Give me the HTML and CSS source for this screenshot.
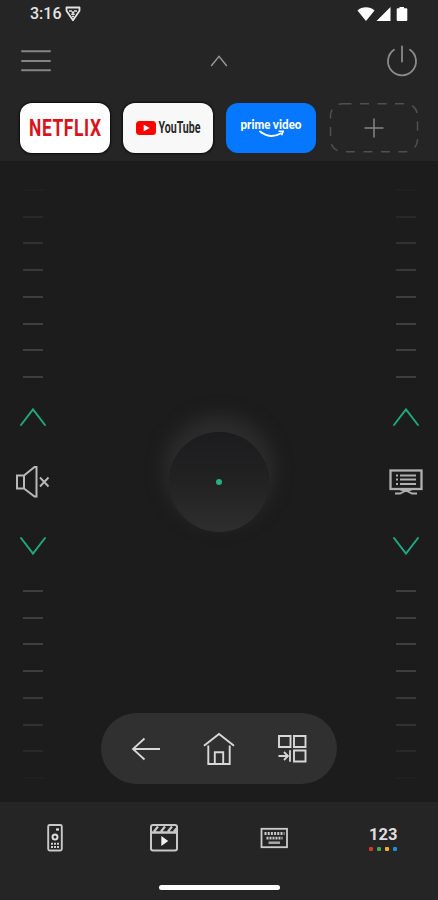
FILE: index.html
```
<!DOCTYPE html>
<html lang="en">
<head>
  <meta charset="UTF-8">
  <meta name="viewport" content="width=device-width, initial-scale=1.0">
  <title>TV Remote</title>
  <link rel="stylesheet" href="styles.css">
</head>
<body>
  <header class="header">
    <div class="status-bar">
      <span class="clock">3:16</span>
      <svg class="status-badge" width="16" height="16" viewBox="0 0 16 16">
        <path d="M1.500 1.500h13v3.200L8 14.200 1.500 4.700z" fill="none" stroke="#e4e4e4" stroke-width="1.800" stroke-linejoin="round"/>
        <path d="M4 5h3M9 5h3M6.300 8.200h3.400M7 10.500h2" stroke="#e4e4e4" stroke-width="1.500"/>
        <circle cx="8" cy="6.500" r="1.300" fill="#e4e4e4"/>
      </svg>
      <svg class="status-icons" width="52" height="16" viewBox="0 0 52 16">
        <path d="M0.500 4.400C5 0.200 13 0.200 17.500 4.400L9 15z" fill="#fff"/>
        <path d="M19.500 15L33.500 1v14z" fill="#fff"/>
        <path d="M42.500 1h4.500v1.300h2.300q1 0 1 1V14q0 1-1 1h-8.600q-1 0-1-1V3.300q0-1 1-1h1.800z" fill="#fff"/>
      </svg>
    </div>

    <div class="toolbar">
      <svg width="30" height="32" viewBox="0 0 30 32">
        <path d="M1 6.200h28M1 16h28M1 25.300h28" stroke="#858585" stroke-width="2" stroke-linecap="round"/>
      </svg>
      <svg width="18" height="12" viewBox="0 0 18 12">
        <path d="M1.200 11L9 1.300 16.800 11" fill="none" stroke="#999" stroke-width="1.400"/>
      </svg>
      <svg width="32" height="32" viewBox="0 0 32 32">
        <path d="M8 4.800a14 14 0 1 0 16 0M16 1.500v15" fill="none" stroke="#8b8b8b" stroke-width="1.800" stroke-linecap="round"/>
      </svg>
    </div>

    <div class="apps">
      <div class="app netflix">
        <svg width="90" height="50" viewBox="0 0 90 50">
          <g transform="scale(1 1.350)">
            <text class="netflix-text" x="9" y="24.700" textLength="72" lengthAdjust="spacing">NETFLIX</text>
          </g>
        </svg>
      </div>
      <div class="app youtube">
        <svg width="90" height="50" viewBox="0 0 90 50">
          <rect x="13" y="18" width="20" height="14" rx="3.500" fill="#f00"/>
          <path d="M20.700 21.700v6.600l6-3.300z" fill="#fff"/>
          <g transform="scale(1 1.300)">
            <text class="youtube-text" x="35.500" y="23.300" textLength="42" lengthAdjust="spacingAndGlyphs">YouTube</text>
          </g>
        </svg>
      </div>
      <div class="app prime">
        <svg width="90" height="50" viewBox="0 0 90 50">
          <text class="prime-text" x="14.500" y="25.500" textLength="61" lengthAdjust="spacingAndGlyphs">prime video</text>
          <path d="M34 28.500q10.500 8 21 1.700" fill="none" stroke="#fff" stroke-width="1.900" stroke-linecap="round"/>
          <path d="M52.500 28.300h4.700l-1.500 4" fill="none" stroke="#fff" stroke-width="1.500"/>
        </svg>
      </div>
      <svg width="90" height="52" viewBox="0 0 90 52">
        <rect x="1.500" y="1.700" width="87" height="48" rx="12" fill="none" stroke="#505051" stroke-width="1.500" stroke-dasharray="9 8.500"/>
        <path d="M35.500 26h19M45 16.500v19" stroke="#858585" stroke-width="1.500"/>
      </svg>
    </div>
  </header>

  <main class="touchpad">
    <div class="rail">
      <div class="ticks ticks-up">
        <i></i><i></i><i></i><i></i><i></i><i></i><i></i><i></i>
      </div>
      <svg class="chevron" width="28" height="20" viewBox="0 0 28 20">
        <path d="M2 18L14 2.500 26 18"/>
      </svg>
      <!-- mute -->
      <svg class="rail-icon" width="36" height="36" viewBox="0 0 36 36">
        <path d="M2 11.500h7v13H2zM9 11.500L19.500 3h2v29.500h-2L9 24.500" fill="none" stroke="#b8b8b8" stroke-width="2"/>
        <path d="M25 13.500l8.500 9M33.500 13.500l-8.500 9" stroke="#b8b8b8" stroke-width="1.900"/>
      </svg>
      <svg class="chevron" width="28" height="20" viewBox="0 0 28 20">
        <path d="M2 2L14 17.500 26 2"/>
      </svg>
      <div class="ticks ticks-down">
        <i></i><i></i><i></i><i></i><i></i><i></i><i></i><i></i>
      </div>
    </div>

    <div class="center">
      <div class="knob"><span class="knob-dot"></span></div>
      <nav class="nav-pill">
        <svg width="32" height="34" viewBox="0 0 32 34">
          <path d="M30 17H3M14.500 6.500L3 17l11.500 10.500" fill="none" stroke="#d8d8d8" stroke-width="1.800"/>
        </svg>
        <svg width="32" height="34" viewBox="0 0 32 34">
          <path d="M1 13.700L16 2l15 11.700M5.300 13.500V32h21.400V13.500M11.800 32V20.300h8.400V32" fill="none" stroke="#d8d8d8" stroke-width="1.900"/>
        </svg>
        <svg width="32" height="34" viewBox="0 0 32 34">
          <path d="M3 4h11.500v11H3zM18 4h11.500v11H18zM18 18.500h11.500v11H18z" fill="none" stroke="#d8d8d8" stroke-width="1.900"/>
          <path d="M2.500 24H12M8 20l4 4-4 4M14 18.200v11.500" fill="none" stroke="#d8d8d8" stroke-width="1.800"/>
        </svg>
      </nav>
    </div>

    <div class="rail">
      <div class="ticks ticks-up">
        <i></i><i></i><i></i><i></i><i></i><i></i><i></i><i></i>
      </div>
      <svg class="chevron" width="28" height="20" viewBox="0 0 28 20">
        <path d="M2 18L14 2.500 26 18"/>
      </svg>
      <!-- channel list -->
      <svg class="rail-icon" width="36" height="36" viewBox="0 0 36 36">
        <rect x="2.500" y="6.500" width="31" height="18.500" fill="none" stroke="#b0b0b0" stroke-width="2.300"/>
        <path d="M8 11.500h2M8 15.500h2M8 20h2M12 11.500h16M12 15.500h16M12 20h16" stroke="#b0b0b0" stroke-width="1.800"/>
        <path d="M7 29.500h5l6-3 6 3h5M12 25.500l6 1.500 6-1.500" fill="none" stroke="#b0b0b0" stroke-width="1.800"/>
      </svg>
      <svg class="chevron" width="28" height="20" viewBox="0 0 28 20">
        <path d="M2 2L14 17.500 26 2"/>
      </svg>
      <div class="ticks ticks-down">
        <i></i><i></i><i></i><i></i><i></i><i></i><i></i><i></i>
      </div>
    </div>
  </main>

  <footer class="footer">
    <nav class="tabs">
      <div class="tab">
        <svg width="18" height="30" viewBox="0 0 18 30">
          <rect x="2.200" y="2" width="13.600" height="25.500" rx="1.500" fill="none" stroke="#c8c8c8" stroke-width="1.900"/>
          <circle cx="9" cy="14" r="2.500" fill="none" stroke="#ddd" stroke-width="2"/>
          <path d="M10 6.500h3" stroke="#ddd" stroke-width="2.200"/>
          <path d="M5 20.700h8M5 24h8" stroke="#d0d0d0" stroke-width="2" stroke-dasharray="2 1"/>
        </svg>
      </div>
      <div class="tab">
        <svg width="30" height="30" viewBox="0 0 30 30">
          <rect x="2" y="2" width="26" height="25.500" rx="2" fill="none" stroke="#c8c8c8" stroke-width="2"/>
          <path d="M2 9.500h26M5 8.500l4-5M12 8.500l4-5M19 8.500l4-5M25 8.500l2.500-3" stroke="#c8c8c8" stroke-width="2.300"/>
          <path d="M12.300 13v10l7-5z" fill="#f0f0f0"/>
        </svg>
      </div>
      <div class="tab">
        <svg width="30" height="30" viewBox="0 0 30 30">
          <rect x="2.500" y="5.800" width="25.500" height="18.400" fill="none" stroke="#ccc" stroke-width="1.800"/>
          <path d="M5.500 10.500h20" stroke="#ccc" stroke-width="3.200" stroke-dasharray="2 1.200"/>
          <path d="M7.500 15.200h16" stroke="#ccc" stroke-width="2.800" stroke-dasharray="2 1"/>
          <path d="M9.500 19.700h11.500" stroke="#aaa" stroke-width="2.500"/>
        </svg>
      </div>
      <div class="tab numbers">
        <span>123</span>
        <div class="color-keys">
          <i class="red"></i><i class="green"></i><i class="yellow"></i><i class="blue"></i>
        </div>
      </div>
    </nav>
    <div class="home-bar"></div>
  </footer>
</body>
</html>
```
FILE: styles.css
```
* {
  margin: 0;
  padding: 0;
  box-sizing: border-box;
}

body {
  width: 438px;
  height: 900px;
  display: flex;
  flex-direction: column;
  overflow: hidden;
  background-color: #1c1c1d;
  color: #e4e4e4;
  font-family: Roboto, "Liberation Sans", sans-serif;
}

svg {
  display: block;
  flex-shrink: 0;
}

.header {
  height: 161px;
  background-color: #252526;
}

.status-bar {
  display: flex;
  align-items: center;
  height: 28px;
  padding: 0 29px 0 30px;
}

.clock {
  width: 31px;
  font-size: 16px;
  font-weight: 500;
  line-height: 28px;
}

.status-badge {
  margin-left: 4px;
}

.status-icons {
  margin-left: auto;
}

.toolbar {
  display: flex;
  align-items: center;
  justify-content: space-between;
  height: 66px;
  padding: 0 20px 0 21px;
}

.apps {
  display: flex;
  gap: 13px;
  padding: 8px 20px 0;
}

.app {
  width: 90px;
  height: 50px;
  margin-top: 1px;
  border-radius: 12px;
  box-shadow: 0 0 2px 1px #0c0c0c;
}

.netflix {
  background-color: #fff;
}

.youtube {
  background-color: #f8f8f8;
}

.prime {
  background-color: #0578ff;
  box-shadow: none;
}

.netflix-text {
  font: 700 17.5px Roboto, sans-serif;
  fill: #d8131b;
}

.youtube-text {
  font: 700 12px Roboto, sans-serif;
  fill: #282828;
}

.prime-text {
  font: 900 13px Lato, sans-serif;
  fill: #fff;
}

.touchpad {
  display: grid;
  grid-template-columns: 66px 1fr 65px;
  height: 641px;
}

.rail {
  display: flex;
  flex-direction: column;
  align-items: center;
  padding-top: 28px;
}

.ticks {
  display: flex;
  flex-direction: column;
  justify-content: space-between;
  height: 189px;
}

.ticks i {
  width: 20px;
  height: 2px;
  background-color: #3f3f40;
}

.ticks-up i:nth-child(1),
.ticks-down i:nth-child(8) {
  opacity: 0.15;
}

.ticks-up i:nth-child(2),
.ticks-down i:nth-child(7) {
  opacity: 0.35;
}

.ticks-up i:nth-child(3),
.ticks-down i:nth-child(6) {
  opacity: 0.6;
}

.ticks-up i:nth-child(4),
.ticks-down i:nth-child(5) {
  opacity: 0.8;
}

.ticks-up {
  margin-bottom: 29px;
}

.ticks-down {
  margin-top: 34px;
}

.rail-icon {
  margin: 37px 0 36px;
}

.chevron path {
  fill: none;
  stroke: #20a77c;
  stroke-width: 2;
  stroke-linecap: round;
}

.center {
  display: grid;
  grid-template-rows: 271px 100px 1fr;
  justify-items: center;
  padding: 0 1px 18px 0;
}

.knob {
  grid-row: 2;
  display: flex;
  align-items: center;
  justify-content: center;
  width: 100px;
  height: 100px;
  border-radius: 50%;
  background: linear-gradient(#1c1c1e, #222223 50%, #2e2e2f);
  box-shadow: 0 -12px 18px 5px #2c2c2c;
}

.knob-dot {
  width: 6px;
  height: 6px;
  border-radius: 50%;
  background-color: #25b085;
}

.nav-pill {
  grid-row: 3;
  align-self: end;
  display: flex;
  align-items: center;
  justify-content: center;
  gap: 41px;
  width: 236px;
  height: 71px;
  border-radius: 36px;
  background-color: #303031;
}

.footer {
  height: 98px;
  background-color: #252526;
}

.tabs {
  display: grid;
  grid-template-columns: repeat(4, 1fr);
  height: 72px;
}

.tab {
  display: flex;
  align-items: center;
  justify-content: center;
}

.numbers {
  flex-direction: column;
  font-size: 16.5px;
  font-weight: 700;
  line-height: 18px;
  color: #dedede;
}

.color-keys {
  display: flex;
  gap: 4px;
  margin-top: 3px;
}

.color-keys i {
  width: 4px;
  height: 4px;
  border-radius: 1px;
}

.red {
  background-color: #d5362c;
}

.green {
  background-color: #48a84a;
}

.yellow {
  background-color: #f2b01f;
}

.blue {
  background-color: #1e8fd2;
}

.home-bar {
  width: 121px;
  height: 5px;
  margin: 11px auto 0;
  border-radius: 3px;
  background-color: #fff;
}
```
